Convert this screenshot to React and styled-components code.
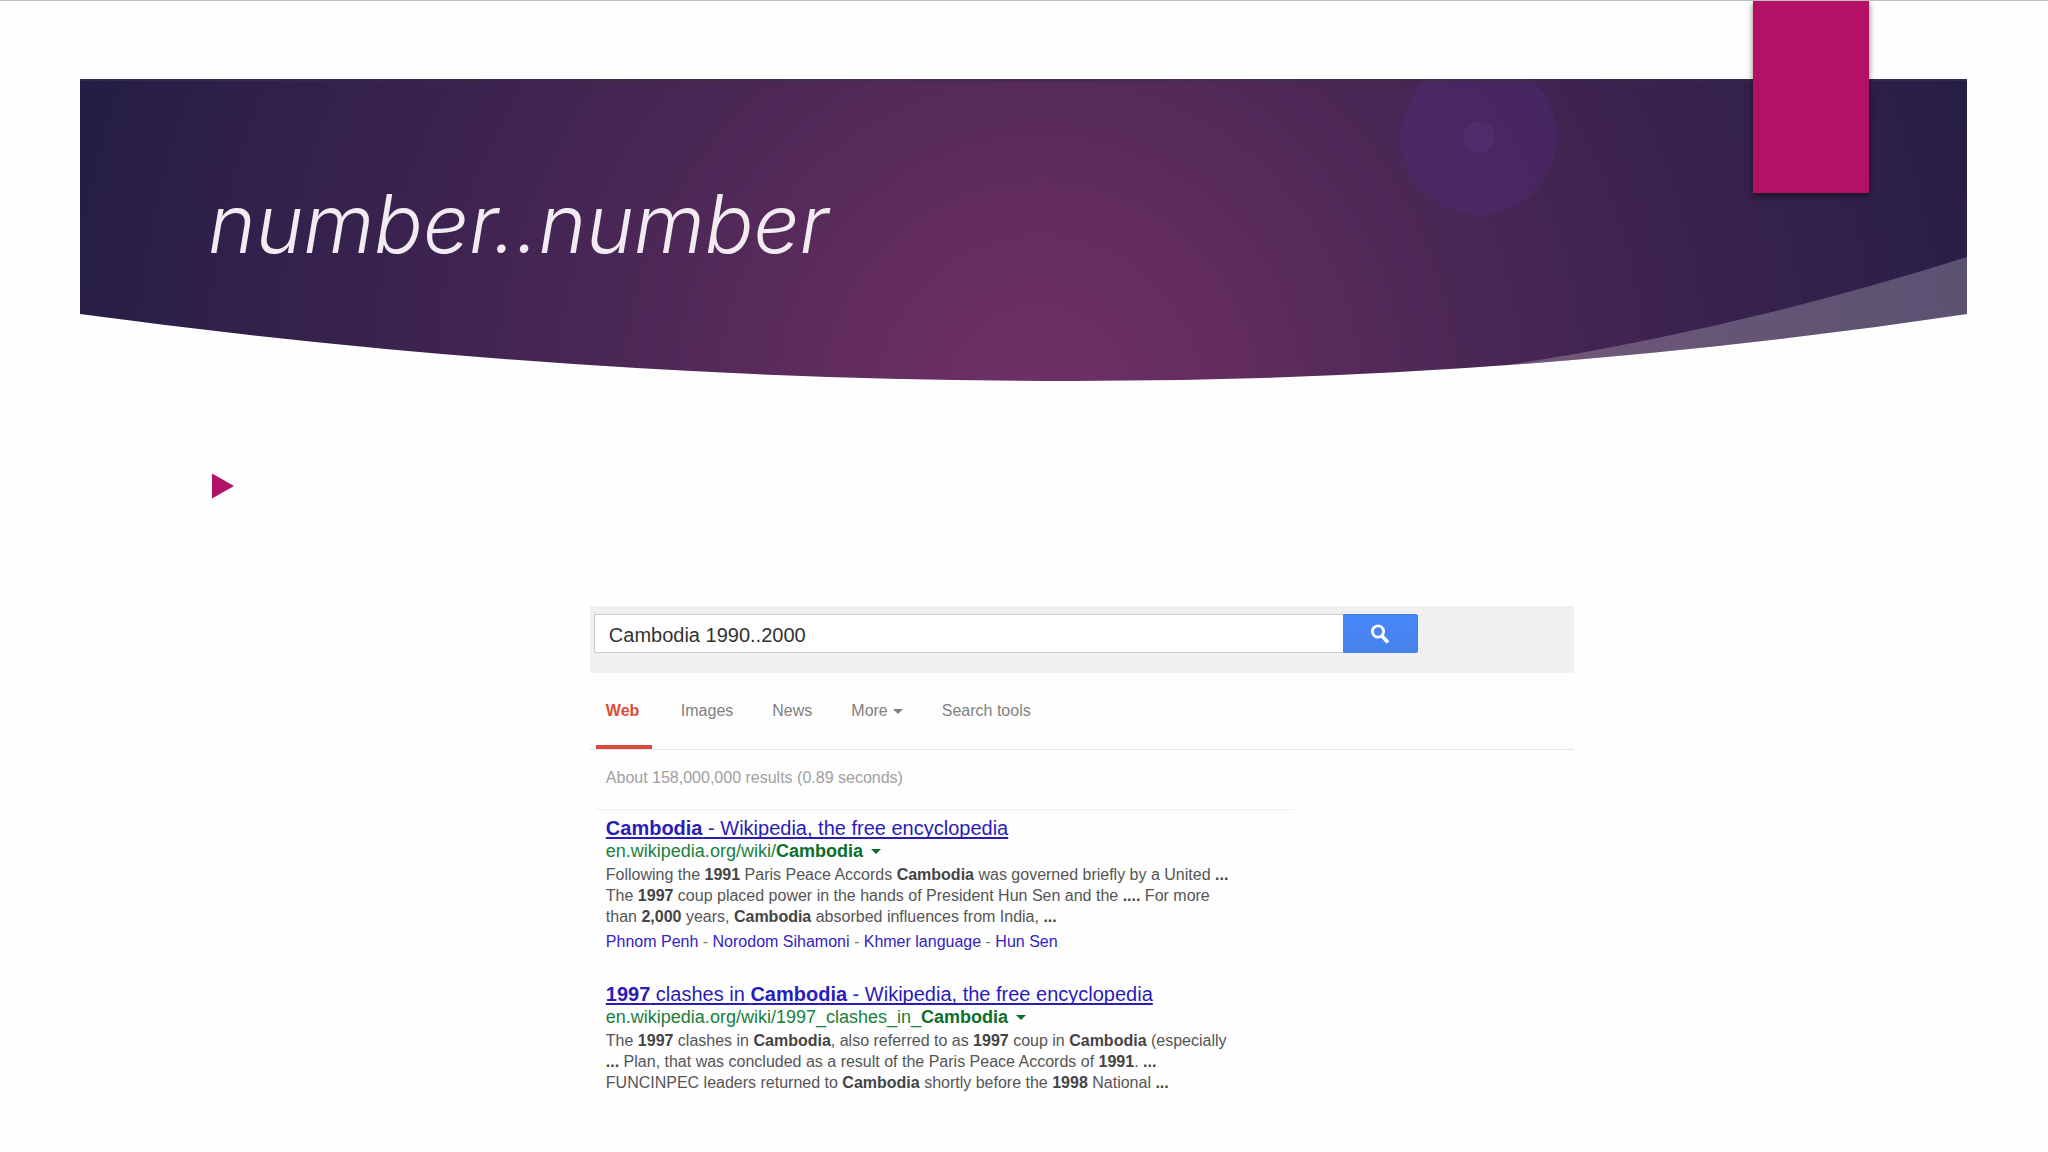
import React from "react";
import styled, { createGlobalStyle } from "styled-components";

const GlobalStyle = createGlobalStyle`
  * {
    box-sizing: border-box;
  }

  body {
    margin: 0;
    background: #fefefe;
    font-family: "Liberation Sans", Arial, sans-serif;
  }
`;

const Slide = styled.main`
  position: relative;
  min-height: 100vh;
  border-top: 1px solid #bdbdbd;
  padding-top: 78px;
  overflow: hidden;
`;

const Ribbon = styled.div`
  position: absolute;
  top: -1px;
  right: 179px;
  width: 116px;
  height: 193px;
  background: #b31166;
  box-shadow: 0 3px 6px rgba(0, 0, 0, 0.5);
`;

const Banner = styled.header`
  position: relative;
  margin: 0 81px 0 80px;
  height: 302px;
  padding: 96px 128px 0;
`;

const BannerArt = styled.svg`
  position: absolute;
  inset: 0;
  width: 100%;
  height: 100%;
`;

const Title = styled.h1`
  position: relative;
  margin: 0;
  color: #f2ebf1;
  font-family: Inter, "Open Sans", sans-serif;
  font-size: 81px;
  line-height: 98px;
  font-style: italic;
  font-weight: 300;
`;

const Bullets = styled.ul`
  list-style: none;
  margin: 92px 0 0 212px;
  padding: 0;

  li {
    height: 26px;
  }

  svg {
    display: block;
    fill: #b31166;
  }
`;

const SearchPage = styled.section`
  width: 48.05%;
  margin: 107px 0 0 28.8%;
`;

const SearchBar = styled.form`
  display: flex;
  height: 67px;
  padding: 8px 156px 20px 4px;
  background: #f1eff2;
`;

const SearchInput = styled.input`
  flex: 1;
  min-width: 0;
  padding: 4px 0 0 14px;
  border: 1px solid #cfcdd2;
  border-right: 0;
  border-radius: 0;
  background: #fff;
  color: #333;
  font-family: inherit;
  font-size: 20px;
  outline: none;
`;

const SearchButton = styled.button`
  display: flex;
  align-items: center;
  justify-content: center;
  width: 75px;
  padding: 0;
  border: 1px solid #4181ee;
  border-radius: 0 2px 2px 0;
  background: linear-gradient(#4787fa, #4683ea);
`;

const Tabs = styled.nav`
  display: flex;
  gap: 19px;
  height: 77px;
  padding-left: 6px;
  border-bottom: 1px solid #e3e3e3;
`;

const Tab = styled.a`
  display: flex;
  align-items: center;
  gap: 5px;
  min-width: 56px;
  height: 76px;
  padding: 4px 10px 0;
  border-bottom: 4px solid ${({ $active }) => ($active ? "#d64b3b" : "transparent")};
  color: ${({ $active }) => ($active ? "#dd4b39" : "#808080")};
  font-size: 16px;
  font-weight: ${({ $active }) => ($active ? "bold" : "normal")};
  text-decoration: none;
`;

const Stats = styled.div`
  width: 71%;
  height: 60px;
  margin-left: 6px;
  padding: 18px 0 0 10px;
  border-bottom: 1px solid #f0f0f0;
  color: #a0a0a0;
  font-size: 16px;
  line-height: 20px;
`;

const Result = styled.article`
  margin: 6px 0 30px 16px;

  h3 {
    margin: 0;
    font-size: 20px;
    line-height: 24px;
    font-weight: normal;
  }

  h3 a {
    color: #2a1cb8;
    text-decoration: underline;
    text-underline-offset: 2px;
    text-decoration-skip-ink: none;
  }
`;

const Url = styled.cite`
  display: flex;
  align-items: center;
  gap: 8px;
  color: #18803a;
  font-size: 18px;
  line-height: 22px;
  font-style: normal;

  b {
    color: #0b6e2a;
  }
`;

const Snippet = styled.p`
  margin: 2px 0 0;
  color: #555;
  font-size: 16px;
  line-height: 21px;

  b {
    color: #444;
  }
`;

const SubLinks = styled.div`
  margin-top: 4px;
  color: #777;
  font-size: 16px;
  line-height: 21px;

  a {
    color: #3322c4;
    text-decoration: none;
  }
`;

const Caret = ({ color }) => (
  <svg width="10" height="5" viewBox="0 0 10 5" aria-hidden="true">
    <path d="M0 0h10L5 5z" fill={color} />
  </svg>
);

const Artwork = () => (
  <BannerArt viewBox="0 0 1887 302" preserveAspectRatio="none" aria-hidden="true">
    <defs>
      <radialGradient id="glow" gradientUnits="userSpaceOnUse" cx="960" cy="320" r="1010">
        <stop offset="0" stopColor="#6f3067" />
        <stop offset="0.2" stopColor="#622c60" />
        <stop offset="0.4" stopColor="#4d2857" />
        <stop offset="0.65" stopColor="#3b224f" />
        <stop offset="0.85" stopColor="#2e204a" />
        <stop offset="1" stopColor="#241d45" />
      </radialGradient>
      <clipPath id="arc">
        <path d="M0 0H1887V235Q1440 302 992 302Q496 302 0 235Z" />
      </clipPath>
    </defs>
    <g clipPath="url(#arc)">
      <rect width="1887" height="302" fill="url(#glow)" />
      <circle cx="1399" cy="58" r="78" fill="#4d2a6c" opacity="0.6" />
      <circle cx="1399" cy="58" r="16" fill="#553070" opacity="0.6" />
      <path d="M1395 291Q1640 256 1887 178V302H1395Z" fill="#fff" opacity="0.23" />
      <rect width="1887" height="2" fill="#3a2f42" opacity="0.7" />
    </g>
  </BannerArt>
);

const results = [
  {
    title: (
      <>
        <b>Cambodia</b> - Wikipedia, the free encyclopedia
      </>
    ),
    url: "en.wikipedia.org/wiki/",
    lines: (
      <>
        Following the <b>1991</b> Paris Peace Accords <b>Cambodia</b> was governed briefly by a United <b>...</b>
        <br />
        The <b>1997</b> coup placed power in the hands of President Hun Sen and the <b>....</b> For more
        <br />
        than <b>2,000</b> years, <b>Cambodia</b> absorbed influences from India, <b>...</b>
      </>
    ),
    links: ["Phnom Penh", "Norodom Sihamoni", "Khmer language", "Hun Sen"],
  },
  {
    title: (
      <>
        <b>1997</b> clashes in <b>Cambodia</b> - Wikipedia, the free encyclopedia
      </>
    ),
    url: "en.wikipedia.org/wiki/1997_clashes_in_",
    lines: (
      <>
        The <b>1997</b> clashes in <b>Cambodia</b>, also referred to as <b>1997</b> coup in <b>Cambodia</b> (especially
        <br />
        <b>...</b> Plan, that was concluded as a result of the Paris Peace Accords of <b>1991</b>. <b>...</b>
        <br />
        FUNCINPEC leaders returned to <b>Cambodia</b> shortly before the <b>1998</b> National <b>...</b>
      </>
    ),
  },
];

const App = () => {
  return (
    <Slide>
      <GlobalStyle />
      <Banner>
        <Artwork />
        <Title>number..number</Title>
      </Banner>
      <Ribbon />
      <Bullets>
        <li>
          <svg width="22" height="26" viewBox="0 0 22 26" aria-hidden="true">
            <path d="M0 0.5L22 13L0 25.5Z" />
          </svg>
        </li>
      </Bullets>
      <SearchPage>
        <SearchBar onSubmit={(e) => e.preventDefault()}>
          <SearchInput type="text" aria-label="Search" defaultValue="Cambodia 1990..2000" />
          <SearchButton type="submit" aria-label="Search">
            <svg width="20" height="20" viewBox="0 0 20 20" fill="none" stroke="#fff" aria-hidden="true">
              <circle cx="8" cy="7.5" r="5.6" strokeWidth="2.8" />
              <path d="M12 12L18 18.5" strokeWidth="3.6" />
            </svg>
          </SearchButton>
        </SearchBar>
        <Tabs>
          <Tab href="#web" $active>
            Web
          </Tab>
          <Tab href="#images">Images</Tab>
          <Tab href="#news">News</Tab>
          <Tab href="#more">
            More <Caret color="#808080" />
          </Tab>
          <Tab href="#tools">Search tools</Tab>
        </Tabs>
        <Stats>About 158,000,000 results (0.89 seconds)</Stats>
        {results.map(({ title, url, lines, links }) => (
          <Result key={url}>
            <h3>
              <a href="#result">{title}</a>
            </h3>
            <Url>
              <span>
                {url}
                <b>Cambodia</b>
              </span>
              <Caret color="#0b6e2a" />
            </Url>
            <Snippet>{lines}</Snippet>
            {links && (
              <SubLinks>
                {links.map((link, i) => (
                  <React.Fragment key={link}>
                    {i > 0 && " - "}
                    <a href="#link">{link}</a>
                  </React.Fragment>
                ))}
              </SubLinks>
            )}
          </Result>
        ))}
      </SearchPage>
    </Slide>
  );
};

export default App;
